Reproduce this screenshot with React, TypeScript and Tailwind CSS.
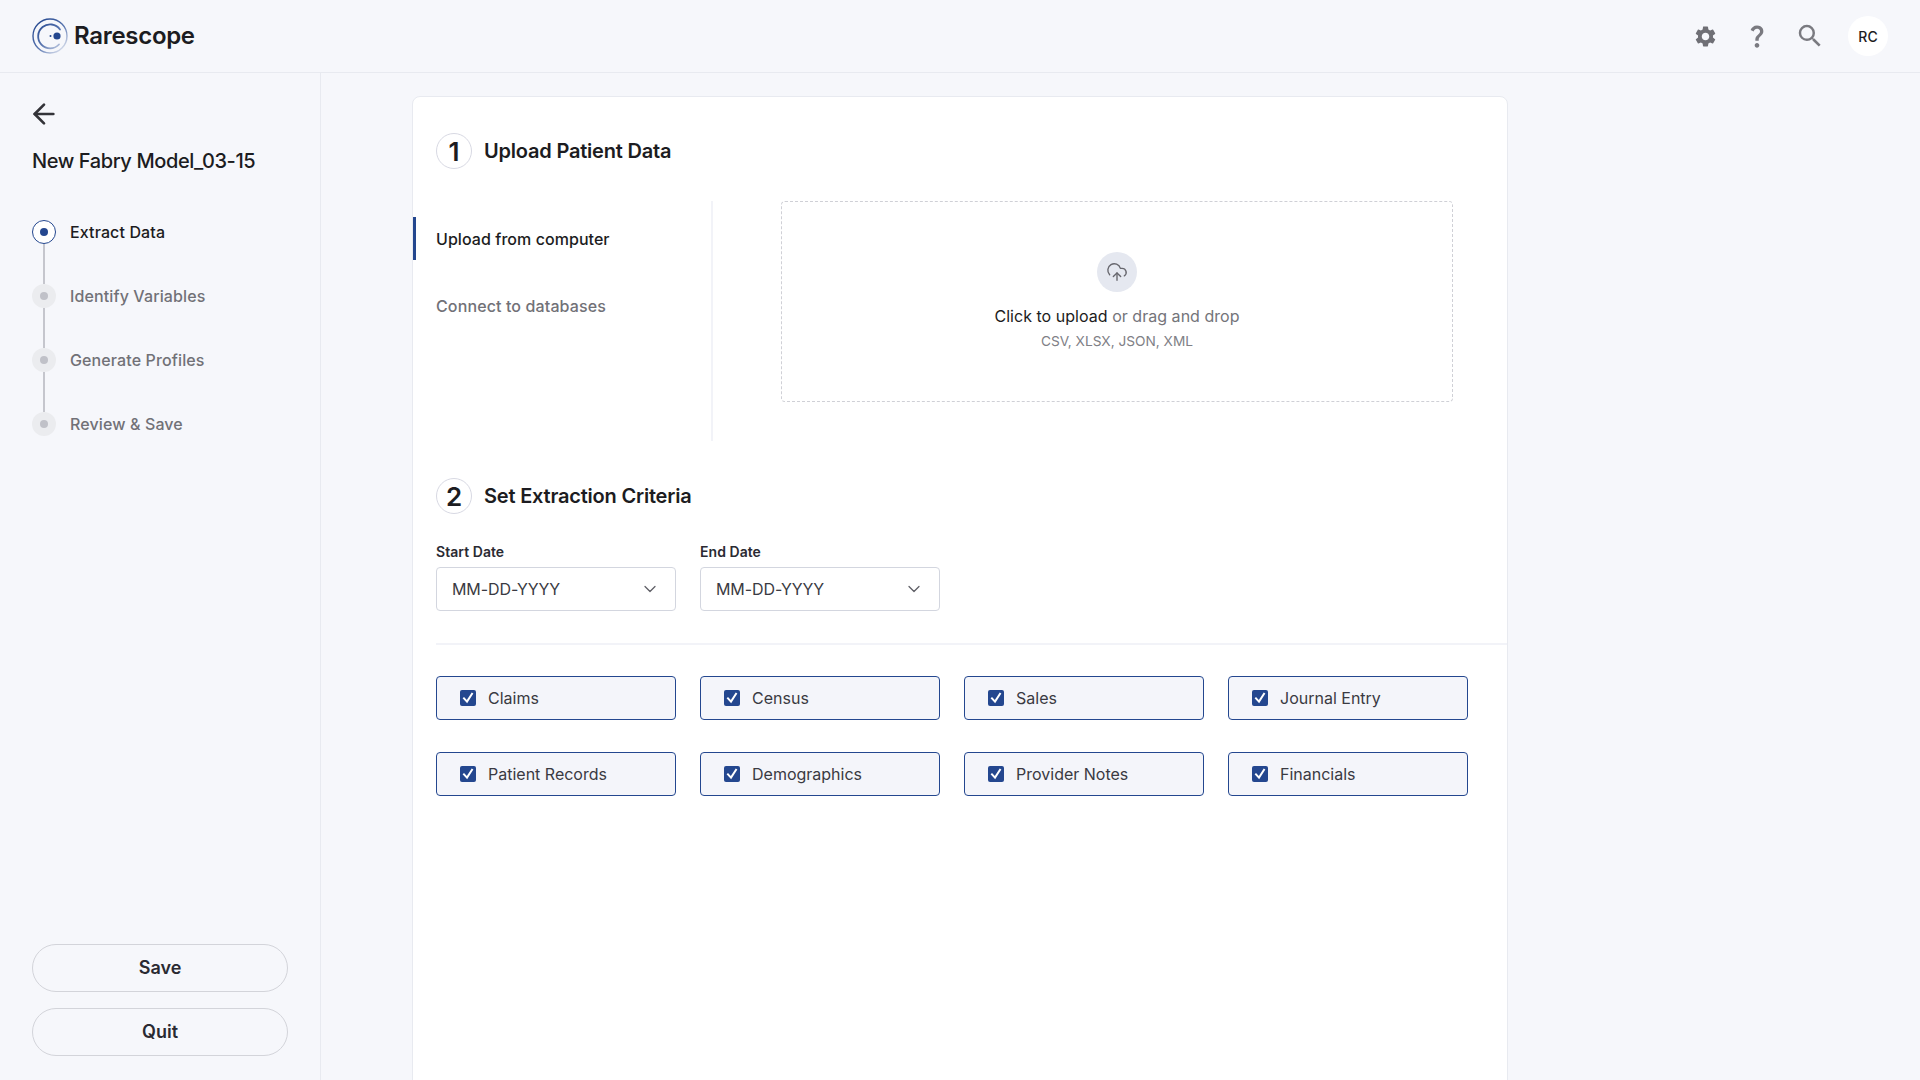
import { ChevronDown, CloudUpload, ArrowLeft } from "lucide-react";
import { MdSettings, MdQuestionMark, MdSearch } from "react-icons/md";

const steps = ["Extract Data", "Identify Variables", "Generate Profiles", "Review & Save"];
const sources = ["Claims", "Census", "Sales", "Journal Entry", "Patient Records", "Demographics", "Provider Notes", "Financials"];

const Logo = () => (
    <svg width="36" height="36" viewBox="0 0 36 36" fill="none">
        <defs>
            <linearGradient id="ring" x1="4" y1="4" x2="30" y2="34" gradientUnits="userSpaceOnUse">
                <stop offset="0" stopColor="#24478f" />
                <stop offset="0.55" stopColor="#5a76b0" />
                <stop offset="1" stopColor="#dfe4f0" />
            </linearGradient>
        </defs>
        <circle cx="18" cy="18" r="17" stroke="url(#ring)" strokeWidth="1.4" />
        <path d="M28 11.5A12 12 0 1 0 27 26.5" stroke="url(#ring)" strokeWidth="1.8" strokeLinecap="round" />
        <circle cx="25" cy="18" r="3.6" fill="#24478f" />
        <circle cx="18.5" cy="18" r="1" fill="#24478f" />
    </svg>
);

const Header = () => (
    <header className="flex h-[73px] shrink-0 items-center justify-between border-b border-[#e8eaf0] pl-8 pr-8">
        <div className="flex items-center gap-[6px]">
            <Logo />
            <span className="text-[24px] font-semibold tracking-[-0.3px] text-[#1c1c21]">Rarescope</span>
        </div>
        <div className="flex items-center">
            <MdSettings size={25} className="text-[#6f6f75]" />
            <MdQuestionMark size={28} className="ml-[25px] text-[#7a7a80]" />
            <MdSearch size={30} className="ml-[24px] text-[#7a7a80]" />
            <div className="ml-[23px] flex h-10 w-10 items-center justify-center rounded-full bg-white text-[14px] font-medium text-[#1c1c21]">
                RC
            </div>
        </div>
    </header>
);

const Stepper = () => (
    <div className="mt-[45px] flex flex-col">
        {steps.map((step, i) => (
            <div key={step} className="flex gap-[14px]">
                <div className="flex flex-col items-center">
                    {i === 0 ? (
                        <div className="flex h-6 w-6 items-center justify-center rounded-full border border-[#24478f] bg-white">
                            <div className="h-2 w-2 rounded-full bg-[#24478f]" />
                        </div>
                    ) : (
                        <div className="flex h-6 w-6 items-center justify-center rounded-full bg-[#ebecef]">
                            <div className="h-2 w-2 rounded-full bg-[#c0c1c8]" />
                        </div>
                    )}
                    {i < steps.length - 1 && <div className="h-10 w-0.5 bg-[#c5c6cd]" />}
                </div>
                <span className={`text-[16px] leading-6 font-medium tracking-[0.12px] ${i === 0 ? "text-[#1c1c21]" : "text-[#717177]"}`}>{step}</span>
            </div>
        ))}
    </div>
);

const Sidebar = () => (
    <aside className="flex w-[321px] shrink-0 flex-col border-r border-[#e8eaf0] px-8 pt-[25px] pb-6">
        <ArrowLeft size={32} strokeWidth={2} className="-ml-1 text-[#333338]" />
        <h1 className="mt-[17px] text-[20px] leading-[28px] font-medium tracking-[-0.4px] text-[#1c1c21]">New Fabry Model_03-15</h1>
        <Stepper />
        <div className="mt-auto flex w-[256px] flex-col gap-4">
            <button className="h-12 rounded-full border border-[#d3d4da] pb-[1px] text-[18px] font-semibold text-[#2a2a32]">Save</button>
            <button className="h-12 rounded-full border border-[#d3d4da] pb-[1px] text-[18px] font-semibold text-[#2a2a32]">Quit</button>
        </div>
    </aside>
);

const SectionTitle = ({ num, title }: { num: number; title: string }) => (
    <div className="flex items-center gap-3">
        <div className="flex h-9 w-9 items-center justify-center rounded-full border border-[#d8d9e3] text-[26px] font-semibold text-[#1c1c21]">{num}</div>
        <h2 className="text-[20px] font-semibold tracking-[-0.2px] text-[#1c1c21]">{title}</h2>
    </div>
);

const DateSelect = ({ label }: { label: string }) => (
    <div className="w-60">
        <div className="text-[14px] leading-5 font-semibold tracking-[0.05px] text-[#2a2a32]">{label}</div>
        <div className="mt-[5px] flex h-11 items-center justify-between rounded border border-[#d3d6df] pr-[15px] pl-[15px] text-[16px] tracking-[-0.08px] text-[#3a3a42]">
            MM-DD-YYYY
            <ChevronDown size={20} strokeWidth={1.5} className="text-[#5f5f66]" />
        </div>
    </div>
);

const SourceBox = ({ name }: { name: string }) => (
    <div className="flex h-11 w-60 items-center gap-[12px] rounded border border-[#24478f] bg-[#f4f5fa] pl-[23px]">
        <div className="flex h-4 w-4 items-center justify-center rounded-[2px] bg-[#24478f]">
            <svg width="14" height="14" viewBox="0 0 14 14" fill="none">
                <path d="M3 7.4L6 10.6L11 2.8" stroke="#ffffff" strokeWidth="2" strokeLinecap="square" />
            </svg>
        </div>
        <span className="text-[16px] text-[#3a3a42]">{name}</span>
    </div>
);

export default function App() {
    return (
        <div className="flex h-screen flex-col overflow-hidden bg-[#f6f7fb] font-['Inter',sans-serif]">
            <Header />
            <div className="flex min-h-0 flex-1">
                <Sidebar />
                <main className="flex-1 pt-[23px] pl-[91px]">
                    <div className="h-[1000px] w-[1096px] rounded-t-lg border border-[#e8eaf0] bg-white pt-[36px]">
                        <div className="pl-[23px]">
                            <SectionTitle num={1} title="Upload Patient Data" />
                        </div>
                        <div className="mt-[32px] flex h-60">
                            <div className="w-[300px] shrink-0 border-r-2 border-[#f2f3f8] pt-4">
                                <div className="flex h-[43px] items-center border-l-[3px] border-[#24478f] pl-5 text-[16px] font-medium tracking-[0.06px] text-[#1c1c21]">Upload from computer</div>
                                <div className="mt-[24px] flex h-[43px] items-center pl-[23px] text-[16px] font-medium tracking-[0.12px] text-[#717177]">Connect to databases</div>
                            </div>
                            <div className="ml-[68px] flex h-[201px] w-[672px] flex-col items-center rounded border border-dashed border-[#cfd0d6] pt-[50px]">
                                <div className="flex h-10 w-10 items-center justify-center rounded-full bg-[#e5e8f0]">
                                    <CloudUpload size={22} strokeWidth={1.5} className="text-[#66666d]" />
                                </div>
                                <p className="mt-[12px] text-[16px] leading-6 tracking-[0.03px] text-[#74747a]"><span className="text-[#1c1c21]">Click to upload</span> or drag and drop</p>
                                <p className="mt-[3px] text-[13.7px] leading-5 text-[#808086]">CSV, XLSX, JSON, XML</p>
                            </div>
                        </div>
                        <div className="mt-[37px] pl-[23px]">
                            <SectionTitle num={2} title="Set Extraction Criteria" />
                            <div className="mt-[28px] flex gap-6">
                                <DateSelect label="Start Date" />
                                <DateSelect label="End Date" />
                            </div>
                            <div className="mt-8 h-0.5 bg-[#f2f3f8]" />
                            <div className="mt-[31px] grid w-[1032px] grid-cols-4 gap-x-6 gap-y-8">
                                {sources.map((s) => (
                                    <SourceBox key={s} name={s} />
                                ))}
                            </div>
                        </div>
                    </div>
                </main>
            </div>
        </div>
    );
}
